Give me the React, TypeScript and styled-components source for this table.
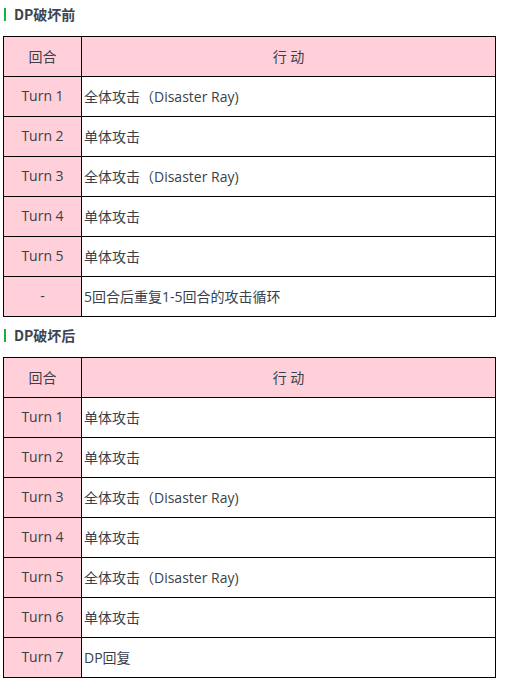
import React from "react";
import styled, { createGlobalStyle } from "styled-components";

const Global = createGlobalStyle`
  html, body { margin: 0; padding: 0; background: #fff; }
  body { font-family: "Noto Sans", "Noto Sans CJK SC", sans-serif; }
`;

const Page = styled.div`
  width: 523px;
  padding: 4px 0 0 3px;
  box-sizing: border-box;
  display: flex;
  flex-direction: column;
  gap: 8px;
`;

const Section = styled.section`
  display: flex;
  flex-direction: column;
`;

const Heading = styled.h3`
  margin: 0 0 12px 1px;
  height: 20px;
  display: flex;
  align-items: center;
  gap: 8px;
  font-family: "Noto Sans CJK SC", "Noto Sans", sans-serif;
  font-size: 14px;
  font-weight: 700;
  color: #3d4450;
  &::before {
    content: "";
    width: 2px;
    height: 13px;
    background: #14b04a;
  }
`;

const Table = styled.table`
  width: 493px;
  border-collapse: collapse;
  table-layout: fixed;
  font-family: "Open Sans", "Noto Sans CJK SC", sans-serif;
  font-size: 14px;
  color: #3a3f4a;
`;

const Cell = styled.td<{ $head?: boolean; $center?: boolean }>`
  height: 40px;
  padding: 0 2px 2px;
  border: 1px solid #000;
  background: ${(p) => (p.$head ? "#ffd0d9" : "#fff")};
  text-align: ${(p) => (p.$center ? "center" : "left")};
  vertical-align: middle;
  box-sizing: border-box;
`;

type Row = [string, string];

const before: Row[] = [
  ["Turn 1", "全体攻击（Disaster Ray)"],
  ["Turn 2", "单体攻击"],
  ["Turn 3", "全体攻击（Disaster Ray)"],
  ["Turn 4", "单体攻击"],
  ["Turn 5", "单体攻击"],
  ["-", "5回合后重复1-5回合的攻击循环"],
];

const after: Row[] = [
  ["Turn 1", "单体攻击"],
  ["Turn 2", "单体攻击"],
  ["Turn 3", "全体攻击（Disaster Ray)"],
  ["Turn 4", "单体攻击"],
  ["Turn 5", "全体攻击（Disaster Ray)"],
  ["Turn 6", "单体攻击"],
  ["Turn 7", "DP回复"],
];

function ActionTable({ title, rows }: { title: string; rows: Row[] }) {
  return (
    <Section>
      <Heading>{title}</Heading>
      <Table>
        <colgroup>
          <col style={{ width: 78 }} />
          <col />
        </colgroup>
        <tbody>
          <tr>
            <Cell $head $center>回合</Cell>
            <Cell $head $center>行 动</Cell>
          </tr>
          {rows.map(([t, a], i) => (
            <tr key={i}>
              <Cell $head $center>{t}</Cell>
              <Cell>{a}</Cell>
            </tr>
          ))}
        </tbody>
      </Table>
    </Section>
  );
}

export default function App() {
  return (
    <>
      <Global />
      <Page>
        <ActionTable title="DP破坏前" rows={before} />
        <ActionTable title="DP破坏后" rows={after} />
      </Page>
    </>
  );
}
